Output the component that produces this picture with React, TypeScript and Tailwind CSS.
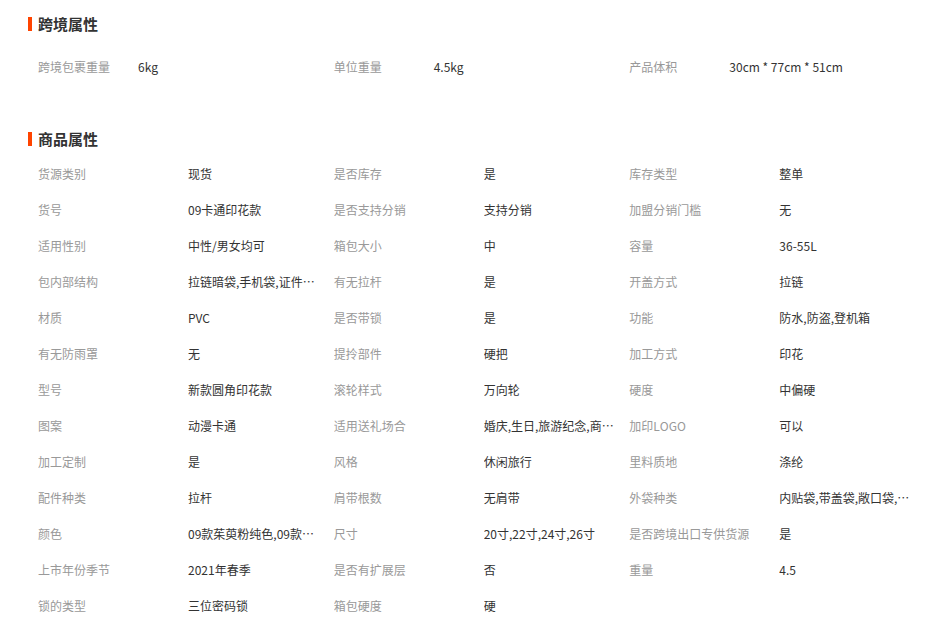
import React from 'react'

interface Attr {
  label: string;
  value: string;
}

const crossBorder: Attr[] = [
  { label: '跨境包裹重量', value: '6kg' },
  { label: '单位重量', value: '4.5kg' },
  { label: '产品体积', value: '30cm * 77cm * 51cm' },
]

const productAttrs: Attr[] = [
  { label: '货源类别', value: '现货' },
  { label: '是否库存', value: '是' },
  { label: '库存类型', value: '整单' },
  { label: '货号', value: '09卡通印花款' },
  { label: '是否支持分销', value: '支持分销' },
  { label: '加盟分销门槛', value: '无' },
  { label: '适用性别', value: '中性/男女均可' },
  { label: '箱包大小', value: '中' },
  { label: '容量', value: '36-55L' },
  { label: '包内部结构', value: '拉链暗袋,手机袋,证件位,电脑插袋' },
  { label: '有无拉杆', value: '是' },
  { label: '开盖方式', value: '拉链' },
  { label: '材质', value: 'PVC' },
  { label: '是否带锁', value: '是' },
  { label: '功能', value: '防水,防盗,登机箱' },
  { label: '有无防雨罩', value: '无' },
  { label: '提拎部件', value: '硬把' },
  { label: '加工方式', value: '印花' },
  { label: '型号', value: '新款圆角印花款' },
  { label: '滚轮样式', value: '万向轮' },
  { label: '硬度', value: '中偏硬' },
  { label: '图案', value: '动漫卡通' },
  { label: '适用送礼场合', value: '婚庆,生日,旅游纪念,商务礼品,节日' },
  { label: '加印LOGO', value: '可以' },
  { label: '加工定制', value: '是' },
  { label: '风格', value: '休闲旅行' },
  { label: '里料质地', value: '涤纶' },
  { label: '配件种类', value: '拉杆' },
  { label: '肩带根数', value: '无肩带' },
  { label: '外袋种类', value: '内贴袋,带盖袋,敞口袋,拉链袋' },
  { label: '颜色', value: '09款茱萸粉纯色,09款卡通印花' },
  { label: '尺寸', value: '20寸,22寸,24寸,26寸' },
  { label: '是否跨境出口专供货源', value: '是' },
  { label: '上市年份季节', value: '2021年春季' },
  { label: '是否有扩展层', value: '否' },
  { label: '重量', value: '4.5' },
  { label: '锁的类型', value: '三位密码锁' },
  { label: '箱包硬度', value: '硬' },
]

const SectionTitle: React.FC<{ title: string }> = ({ title }) => (
  <div className="flex items-center h-[20px]">
    <span className="w-[4px] h-[14px] bg-[#ff4400]" />
    <h3 className="ml-[6px] text-[15px] font-bold text-[#333]">{title}</h3>
  </div>
)

export default function App() {
  return (
    <div
      className="w-[927px] h-[627px] bg-white pl-[28px] pt-[14px] overflow-hidden"
      style={{ fontFamily: '"Noto Sans CJK SC", "Noto Sans", sans-serif' }}
    >
      {/* Cross-border attributes */}
      <SectionTitle title="跨境属性" />
      <div className="mt-[15px] ml-[10px] grid grid-cols-3 w-[887px]">
        {crossBorder.map((a) => (
          <div key={a.label} className="flex items-center h-[36px] text-[12px]">
            <span className="w-[100px] shrink-0 text-[#999]">{a.label}</span>
            <span className="text-[#333]">{a.value}</span>
          </div>
        ))}
      </div>

      {/* Product attributes */}
      <div className="mt-[44px]">
        <SectionTitle title="商品属性" />
      </div>
      <div className="mt-[7px] ml-[10px] grid grid-cols-3 w-[887px]">
        {productAttrs.map((a) => (
          <div key={a.label} className="flex items-center h-[36px] text-[12px] min-w-0 overflow-hidden">
            <span className="w-[150px] shrink-0 text-[#999] truncate pr-[4px]">{a.label}</span>
            <span className="w-[134px] text-[#333] truncate">{a.value}</span>
          </div>
        ))}
      </div>
    </div>
  )
}
